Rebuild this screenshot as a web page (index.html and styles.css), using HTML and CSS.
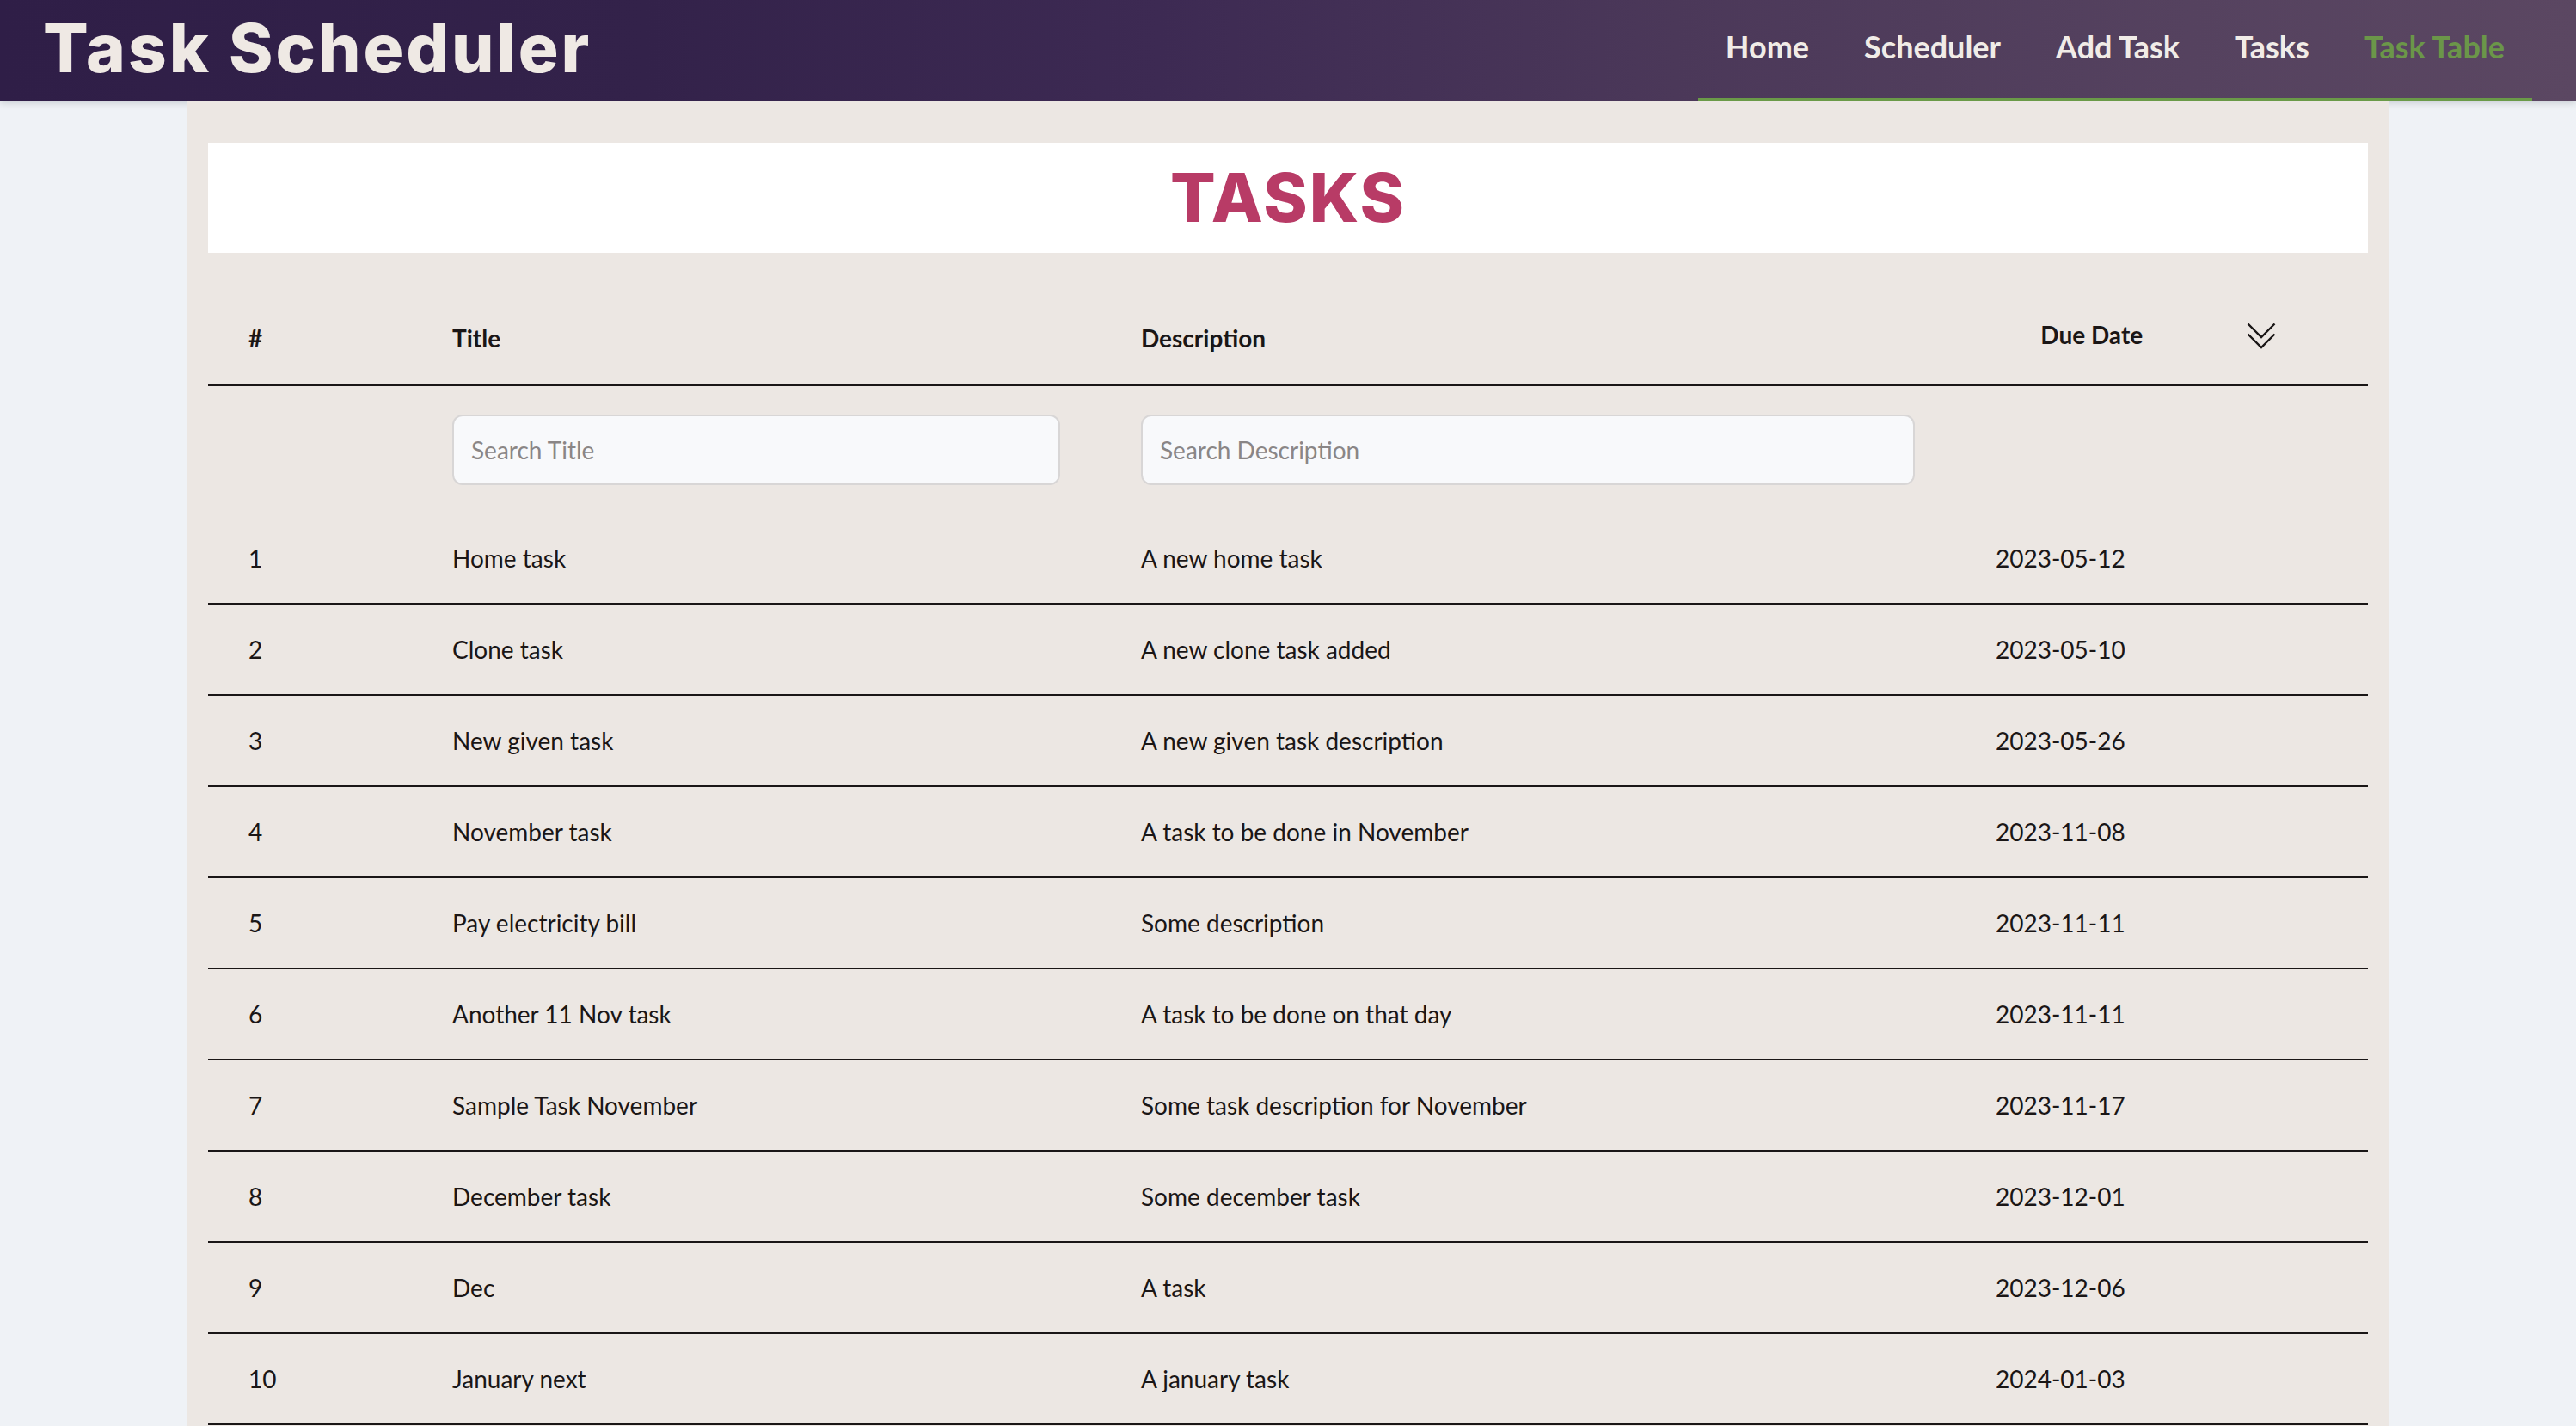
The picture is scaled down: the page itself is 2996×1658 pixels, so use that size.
FILE: index.html
```html
<!DOCTYPE html>
<html lang="en">
<head>
<meta charset="utf-8">
<title>Task Scheduler</title>
<link rel="stylesheet" href="styles.css">
</head>
<body>
<header class="topbar">
  <h1 class="brand">Task Scheduler</h1>
  <nav class="nav">
    <a class="nav-link" href="#">Home</a>
    <a class="nav-link" href="#">Scheduler</a>
    <a class="nav-link" href="#">Add Task</a>
    <a class="nav-link" href="#">Tasks</a>
    <a class="nav-link active" href="#">Task Table</a>
  </nav>
</header>
<main class="panel">
  <section class="title-card">
    <h2 class="page-title">TASKS</h2>
  </section>
  <table class="tasks">
    <colgroup>
      <col class="c-num">
      <col class="c-title">
      <col class="c-desc">
      <col class="c-date">
    </colgroup>
    <thead>
      <tr class="head-row">
        <th>#</th>
        <th>Title</th>
        <th>Description</th>
        <th>
          <div class="sort-head">
            <span class="sort-label">Due Date</span>
            <svg class="sort-icon" width="34" height="32" viewBox="0 0 34 32" aria-hidden="true">
              <path d="M1.5 1.5 L17 17 L32.5 1.5" fill="none" stroke="#1a1616" stroke-width="2.4"/>
              <path d="M1.5 13.5 L17 29 L32.5 13.5" fill="none" stroke="#1a1616" stroke-width="2.4"/>
            </svg>
          </div>
        </th>
      </tr>
      <tr class="search-row">
        <td></td>
        <td><input class="search" type="text" placeholder="Search Title"></td>
        <td><input class="search" type="text" placeholder="Search Description"></td>
        <td></td>
      </tr>
    </thead>
    <tbody>
      <tr><td>1</td><td>Home task</td><td>A new home task</td><td>2023-05-12</td></tr>
      <tr><td>2</td><td>Clone task</td><td>A new clone task added</td><td>2023-05-10</td></tr>
      <tr><td>3</td><td>New given task</td><td>A new given task description</td><td>2023-05-26</td></tr>
      <tr><td>4</td><td>November task</td><td>A task to be done in November</td><td>2023-11-08</td></tr>
      <tr><td>5</td><td>Pay electricity bill</td><td>Some description</td><td>2023-11-11</td></tr>
      <tr><td>6</td><td>Another 11 Nov task</td><td>A task to be done on that day</td><td>2023-11-11</td></tr>
      <tr><td>7</td><td>Sample Task November</td><td>Some task description for November</td><td>2023-11-17</td></tr>
      <tr><td>8</td><td>December task</td><td>Some december task</td><td>2023-12-01</td></tr>
      <tr><td>9</td><td>Dec</td><td>A task</td><td>2023-12-06</td></tr>
      <tr><td>10</td><td>January next</td><td>A january task</td><td>2024-01-03</td></tr>
    </tbody>
  </table>
</main>
</body>
</html>
```

FILE: styles.css
```css
* { box-sizing: border-box; }

html, body {
  margin: 0;
  padding: 0;
}

body {
  background: #eff2f6;
  font-family: Lato, "Open Sans", sans-serif;
  color: #1a1616;
}

.topbar {
  height: 117px;
  display: flex;
  align-items: stretch;
  justify-content: space-between;
  padding: 0 51px 0 50px;
  background: linear-gradient(90deg, #2f1e47 0%, #33224a 25%, #3d2a53 45%, #4b3859 65%, #55425f 85%, #5b4762 100%);
  box-shadow: 0 2px 8px rgba(60, 70, 80, 0.25);
}

.brand {
  margin: 0;
  display: flex;
  align-items: center;
  padding-bottom: 6px;
  font-family: Inter, "Open Sans", sans-serif;
  font-weight: 800;
  font-size: 78px;
  letter-spacing: 3px;
  color: #efe9e4;
}

.nav {
  display: flex;
  align-items: stretch;
  border-bottom: 3px solid #6a9a48;
}

.nav-link {
  display: flex;
  align-items: center;
  padding: 0 32px 7px;
  font-family: Lato, sans-serif;
  font-weight: 700;
  font-size: 36px;
  color: #f1ece7;
  text-decoration: none;
}

.nav-link.active {
  color: #6b9649;
}

.panel {
  width: 2560px;
  margin: 0 auto;
  background: #ece7e3;
  padding: 49px 24px 40px;
}

.title-card {
  background: #ffffff;
  height: 128px;
  display: flex;
  align-items: center;
  justify-content: center;
}

.page-title {
  margin: 0;
  font-family: Inter, "Open Sans", sans-serif;
  font-weight: 800;
  font-size: 78px;
  letter-spacing: 2px;
  color: #b83b66;
  padding-bottom: 2px;
}

.tasks {
  width: 100%;
  table-layout: fixed;
  border-collapse: collapse;
  margin-top: 45px;
  font-size: 28px;
}

.c-num { width: 237px; }
.c-title { width: 801px; }
.c-desc { width: 994px; }
.c-date { width: 480px; }

.tasks th,
.tasks td {
  padding: 0 47px;
  text-align: left;
  vertical-align: middle;
}

.head-row th {
  height: 109px;
  font-weight: 700;
  font-size: 28px;
  border-bottom: 2px solid #1a1616;
}

.sort-head {
  display: flex;
  align-items: center;
  justify-content: space-around;
  padding-bottom: 4px;
  margin-left: -8px;
}

.sort-label {
  padding-bottom: 5px;
}

.sort-icon {
  display: block;
}

.search-row td {
  height: 148px;
}

.search {
  display: block;
  width: 100%;
  height: 82px;
  padding: 0 20px;
  border: 2px solid #d8d6d6;
  border-radius: 12px;
  background: #f8f9fb;
  font-family: Lato, sans-serif;
  font-size: 28px;
  color: #1a1616;
}

.search::placeholder {
  color: #8a8686;
}

.tasks tbody td {
  height: 106px;
  border-bottom: 2px solid #1a1616;
}
```
